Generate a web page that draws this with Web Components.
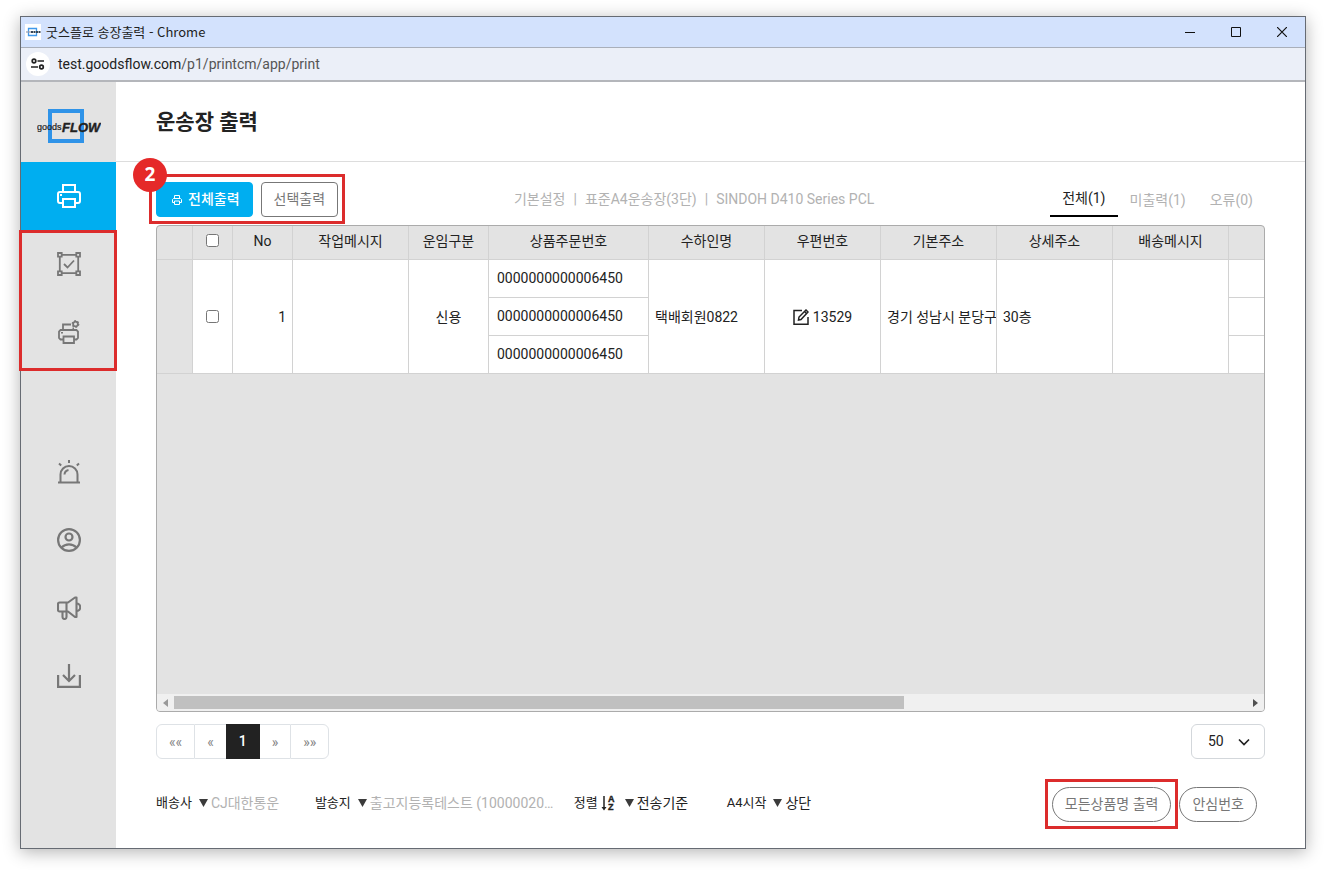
<!DOCTYPE html>
<html lang="ko">
<head>
<meta charset="utf-8">
<meta name="viewport" content="width=device-width, initial-scale=1">
<title>굿스플로 송장출력</title>
<style>
  * { box-sizing: border-box; }
  body {
    margin: 0;
    min-height: 100vh;
    padding: 16px 20px 24px;
    display: flex;
    background: #fff;
    color: #222;
    font: 14px/20px Roboto, "Noto Sans CJK KR", sans-serif;
  }
  app-window { flex: 1; min-width: 0; }
</style>
</head>
<body>
<app-window heading="굿스플로 송장출력 - Chrome" host="test.goodsflow.com" path="/p1/printcm/app/print">
  <side-nav slot="side">
    <nav-item icon="printer" label="운송장 출력" active></nav-item>
    <callout-frame class="stack">
      <nav-item icon="layout" label="양식 설정"></nav-item>
      <nav-item icon="printer-gear" label="프린터 설정"></nav-item>
    </callout-frame>
    <nav-item slot="lower" icon="alarm" label="알림"></nav-item>
    <nav-item slot="lower" icon="user" label="내 정보"></nav-item>
    <nav-item slot="lower" icon="horn" label="공지사항"></nav-item>
    <nav-item slot="lower" icon="download" label="다운로드"></nav-item>
  </side-nav>
  <print-page heading="운송장 출력">
    <callout-frame slot="actions" badge="2">
      <ui-button kind="primary" icon="printer-small">전체출력</ui-button>
      <ui-button>선택출력</ui-button>
    </callout-frame>
    <print-config slot="config"></print-config>
    <filter-tabs slot="tabs"></filter-tabs>
    <order-grid></order-grid>
    <page-nav slot="pager"></page-nav>
    <page-size slot="pager"></page-size>
    <pick-field slot="options" label="배송사" value="CJ대한통운" size="m" muted></pick-field>
    <pick-field slot="options" label="발송지" value="출고지등록테스트 (10000020…" size="l" muted></pick-field>
    <pick-field slot="options" label="정렬" value="전송기준" size="s" icon="sort"></pick-field>
    <pick-field slot="options" label="A4시작" value="상단" size="s"></pick-field>
    <callout-frame slot="extra">
      <ui-button kind="pill">모든상품명 출력</ui-button>
    </callout-frame>
    <ui-button slot="extra" kind="pill">안심번호</ui-button>
  </print-page>
</app-window>

<script>
const icons = {
  'printer': [24, 24, `<g fill="none" stroke="currentColor" stroke-width="2"><path d="M6 8V1h12v7"/><path d="M6 19H3a2 2 0 0 1-2-2v-7a2 2 0 0 1 2-2h18a2 2 0 0 1 2 2v7a2 2 0 0 1-2 2h-3"/><path d="M6 15h12v8H6z"/></g><path fill="currentColor" d="M3 10h2v2H3z"/>`],
  'printer-small': [10, 10, `<g fill="none" stroke="currentColor"><path d="M2.500 3.500v-3h5v3"/><path d="M2.500 7.500H.5v-3l1-1h7l1 1v3h-2"/><path d="M2.500 6h5v3.500h-5z"/></g>`],
  'layout': [24, 24, `<g fill="none" stroke="currentColor" stroke-width="1.800"><path d="M5 2.800h14M5 21.200h14M2.800 5v14M21.200 5v14"/><path d="M1 1h3.700v3.700H1zM19.300 1H23v3.700h-3.700zM1 19.300h3.700V23H1zM19.300 19.300H23V23h-3.700z"/><path d="M7 12l3.500 3.500L17 8.500"/></g>`],
  'printer-gear': [24, 24, `<g fill="none" stroke="currentColor" stroke-width="1.800"><path d="M6 10V4.500h8"/><path d="M6 19.500H3.500L2 18v-6.500L3.500 10h16l1.500 1.500V18l-1.500 1.500H17"/><path d="M6.500 16.500h10.500V23H6.500z"/><circle cx="18.500" cy="4" r="2.400"/></g><g fill="none" stroke="currentColor" stroke-width="1.200" stroke-dasharray="1.700 1.750"><circle cx="18.500" cy="4" r="3.300"/></g><path fill="currentColor" d="M4 12h2v1.500H4zM15.500 7.500H17V9h-1.500z"/>`],
  'alarm': [24, 24, `<g fill="none" stroke="currentColor" stroke-width="2"><path d="M3.500 22v-7.500a8.500 8.500 0 0 1 17 0V22"/><path d="M1 22.500h22"/><path d="M7.500 14.500a5 5 0 0 1 4-4.500"/><path d="M12 0v3M2 3.500l2.200 2M22 3.500l-2.200 2"/></g>`],
  'user': [24, 24, `<g fill="none" stroke="currentColor" stroke-width="2.200"><circle cx="12" cy="12" r="10.900"/><circle cx="12" cy="9" r="3.500"/><path d="M4.500 19.500c4-4.300 11-4.300 15 0"/></g>`],
  'horn': [24, 24, `<g fill="none" stroke="currentColor" stroke-width="2.100" stroke-linejoin="round"><path d="M9.500 6.500H2.500a1.500 1.500 0 0 0-1.500 1.500v6a1.500 1.500 0 0 0 1.500 1.500h8.500l7 5.500h1.500V1.500H18l-7 5H9.500v9"/><path d="M5.500 15.500V21a2 2 0 0 0 4 0v-5.500"/><path d="M19.500 7.500a3.700 3.700 0 0 1 0 7.500"/></g>`],
  'download': [24, 24, `<g fill="none" stroke="currentColor" stroke-width="2.200"><path d="M1.100 11v11.900h21.800V11"/><path d="M12 0v16M6 11l6 6 6-6"/></g>`],
  'edit': [16, 16, `<g fill="none" stroke="currentColor" stroke-width="1.500"><path d="M9 1.500H1v13.700h14V8"/><path d="M5.500 11l.5-3L13 1l2 2-7 7.500z"/><path d="M11.500 2.500l2 2"/></g>`],
  'sort': [15, 16, `<path d="M3 1v12" stroke="currentColor" stroke-width="1.500"/><path d="M.5 12h5L3 15.500z" fill="currentColor"/><text x="7" y="7" font-family="Liberation Sans, sans-serif" font-weight="700" font-size="9" fill="currentColor" stroke="currentColor" stroke-width=".4">A</text><text x="7" y="15" font-family="Liberation Sans, sans-serif" font-weight="700" font-size="9" fill="currentColor" stroke="currentColor" stroke-width=".4">Z</text>`],
  'triangle': [9, 8, `<path d="M0 0h9L4.500 8z" fill="#3b3b3b"/>`],
  'chevron': [12, 8, `<path d="M1 1.500l5 5 5-5" fill="none" stroke="currentColor" stroke-width="1.700"/>`],
  'left': [5, 8, `<path d="M5 0v8L0 4z" fill="currentColor"/>`],
  'right': [5, 8, `<path d="M0 0v8l5-4z" fill="currentColor"/>`],
  'site': [14, 12, `<g fill="none" stroke="currentColor" stroke-width="1.700"><circle cx="3" cy="3" r="1.800"/><circle cx="10.500" cy="9" r="1.800"/><path d="M6.500 3H13M0 9h7"/></g>`],
  'minimize': [10, 10, `<path d="M0 5.500h10" stroke="currentColor"/>`],
  'maximize': [10, 10, `<path d="M.5.5h9v9h-9z" fill="none" stroke="currentColor"/>`],
  'close': [10, 10, `<path d="M0 0l10 10M10 0L0 10" stroke="currentColor" stroke-width="1.200"/>`],
  'favicon': [16, 16, `<path fill="#fff" d="M0 0h16v16H0z"/><path d="M3.500 4.500h8v7h-8z" fill="none" stroke="#3f98ea" stroke-width="1.300"/><path d="M1 8h5" stroke="#99a" stroke-width="1.200"/><path d="M6 8h9.500" stroke="#345" stroke-width="1.800" stroke-dasharray="2 .5"/>`],
  'logo': [64, 36, `<path d="M13 3h32v30H13z" fill="none" stroke="#2f93e8" stroke-width="4"/><text x="0" y="22" font-family="Liberation Sans, sans-serif" font-size="9" fill="#222" stroke="#222" stroke-width=".2">goods</text><text x="25" y="24" font-family="Liberation Sans, sans-serif" font-size="13" font-weight="700" font-style="italic" fill="#222" stroke="#222" stroke-width=".4">FLOW</text>`]
};

const base = `*,*::before,*::after{box-sizing:border-box}:host{display:block}:host([hidden]){display:none}button,select,input{font:inherit;color:inherit}`;

class Base extends HTMLElement {
  connectedCallback() {
    if (this.shadowRoot) return;
    this.attachShadow({ mode: 'open' }).innerHTML = `<style>${base}${this.css()}</style>${this.html()}`;
  }
  at(name) { return this.getAttribute(name) || ''; }
  css() { return ''; }
  html() { return '<slot></slot>'; }
}

customElements.define('ui-icon', class extends Base {
  css() { return `:host{display:inline-flex;flex:none}svg{display:block}`; }
  html() {
    const [w, h, body] = icons[this.at('name')];
    return `<svg width="${w}" height="${h}" viewBox="0 0 ${w} ${h}" aria-hidden="true">${body}</svg>`;
  }
});

customElements.define('app-window', class extends Base {
  css() { return `
    :host{display:flex;flex-direction:column;border:1px solid #666b73;background:#fff;box-shadow:0 3px 16px rgba(0,0,0,.3)}
    .title{display:flex;align-items:center;height:31px;padding-left:4px;background:#d3e2fd;border-bottom:1px solid #a9afba;color:#222;font:13px/20px "Noto Sans CJK KR",sans-serif}
    .title span{flex:1;padding-left:5px}
    .title button{width:46px;height:30px;padding:0;border:0;background:none;display:flex;align-items:center;justify-content:center;color:#111}
    .address{display:flex;align-items:center;height:34px;padding-left:5px;gap:8px;background:#ebeff8;border-bottom:2px solid #b4b6bb;color:#222}
    .site{width:24px;height:24px;border:0;padding:0;border-radius:50%;background:#fff;display:flex;align-items:center;justify-content:center}
    .address em{font-style:normal;color:#555}
    .view{flex:1;display:flex;min-height:0}
    ::slotted(print-page){flex:1;min-width:0}
  `; }
  html() { return `
    <header class="title"><ui-icon name="favicon"></ui-icon><span>${this.at('heading')}</span>
      <button aria-label="최소화"><ui-icon name="minimize"></ui-icon></button>
      <button aria-label="최대화"><ui-icon name="maximize"></ui-icon></button>
      <button aria-label="닫기"><ui-icon name="close"></ui-icon></button></header>
    <div class="address"><button class="site" aria-label="사이트 정보"><ui-icon name="site"></ui-icon></button><span>${this.at('host')}<em>${this.at('path')}</em></span></div>
    <div class="view"><slot name="side"></slot><slot></slot></div>`; }
});

customElements.define('side-nav', class extends Base {
  css() { return `
    :host{width:95px;flex:none;background:#e3e3e3}
    nav{display:flex;flex-direction:column}
    .logo{height:80px;display:flex;align-items:center;justify-content:center;padding-top:8px}
    .lower{margin-top:72px}
  `; }
  html() { return `<nav><a class="logo" href="#" aria-label="goodsFLOW"><ui-icon name="logo"></ui-icon></a><slot></slot><div class="lower"><slot name="lower"></slot></div></nav>`; }
});

customElements.define('nav-item', class extends Base {
  css() { return `
    a{display:flex;align-items:center;justify-content:center;height:68px;color:#777}
    :host([active]) a{background:#00aef0;color:#fff}
  `; }
  html() { return `<a href="#" aria-label="${this.at('label')}"><ui-icon name="${this.at('icon')}"></ui-icon></a>`; }
});

customElements.define('callout-frame', class extends Base {
  css() { return `
    :host{display:flex;gap:8px;position:relative}
    :host(.stack){flex-direction:column;gap:0}
    .frame{position:absolute;inset:-8px -7px -7px;border:3px solid #dc2c2c;pointer-events:none}
    :host(.stack) .frame{inset:0 -1px -5px -2px}
    .badge{position:absolute;left:-23px;top:-24px;width:34px;height:34px;border-radius:50%;background:#e52929;color:#fff;text-align:center;font:700 19px/32px "Open Sans",sans-serif}
  `; }
  html() { return `<slot></slot><div class="frame"></div>${this.at('badge') ? `<span class="badge">${this.at('badge')}</span>` : ''}`; }
});

customElements.define('ui-button', class extends Base {
  css() { return `
    button{display:flex;align-items:center;justify-content:center;gap:6px;height:35px;padding:0 12px 2px;border:1px solid #777;border-radius:4px;background:#fff;color:#777;white-space:nowrap}
    ui-icon{padding-top:2px}
    :host([kind=primary]) button{background:#00aef0;border-color:#00aef0;color:#fff;font-weight:500;padding:0 12px 2px 15px}
    :host([kind=pill]) button{border-radius:18px}
  `; }
  html() { return `<button type="button">${this.at('icon') ? `<ui-icon name="${this.at('icon')}"></ui-icon>` : ''}<slot></slot></button>`; }
});

customElements.define('print-page', class extends Base {
  css() { return `
    :host{display:flex;flex-direction:column}
    h1{margin:0;height:80px;padding:0 40px;display:flex;align-items:center;border-bottom:1px solid #ddd;font-size:21px;line-height:28px;font-weight:700}
    main{flex:1;display:flex;flex-direction:column;padding:20px 40px 26px}
    .bar{display:flex;align-items:center;justify-content:space-between;height:35px}
    .bar.options{justify-content:flex-start;gap:20px}
    .extra{margin:0 8px 0 auto;display:flex;gap:8px}
    ::slotted(order-grid){flex:1;margin:8px 0 12px}
    .options{margin-top:28px}
  `; }
  html() { return `<h1>${this.at('heading')}</h1><main>
    <div class="bar"><slot name="actions"></slot><slot name="config"></slot><slot name="tabs"></slot></div>
    <slot></slot>
    <div class="bar"><slot name="pager"></slot></div>
    <div class="bar options"><slot name="options"></slot><div class="extra"><slot name="extra"></slot></div></div></main>`; }
});

customElements.define('print-config', class extends Base {
  css() { return `:host{color:#b2b2b2;padding-bottom:2px}span{white-space:nowrap}span+span::before{content:"|";margin:0 8px}`; }
  html() { return `<span>기본설정</span><span>표준A4운송장(3단)</span><span>SINDOH D410 Series PCL</span>`; }
});

customElements.define('filter-tabs', class extends Base {
  css() { return `
    div{display:flex}
    button{height:35px;padding:0 12px;border:0;background:none;color:#b2b2b2}
    button[aria-selected=true]{color:#222;border-bottom:2px solid #000;padding-bottom:2px}
  `; }
  html() { return `<div role="tablist"><button role="tab" aria-selected="true">전체(1)</button><button role="tab">미출력(1)</button><button role="tab">오류(0)</button></div>`; }
});

customElements.define('order-grid', class extends Base {
  css() { return `
    :host{display:flex;flex-direction:column;border:1px solid #ababab;border-radius:4px;background:#e3e3e3;overflow:hidden}
    .view{flex:1;overflow:hidden}
    table{table-layout:fixed;width:1352px;border-collapse:separate;border-spacing:0}
    th,td{padding:0 6px;border:solid #d2d2d2;border-width:0 1px 1px 0;overflow:hidden;white-space:nowrap;font-weight:400;text-align:left}
    th{height:34px;padding-bottom:4px;text-align:center}
    td{height:38px;background:#fff}
    td.head{background:#e3e3e3}
    td.mid{text-align:center}
    td.num{text-align:right}
    td.code{padding:0 8px 2px}
    input{display:block;width:13px;height:13px;margin:0 auto}
    .zip{display:flex;align-items:center;justify-content:center;gap:4px;color:#222}
    .scroll{display:flex;align-items:center;height:17px;background:#f0f0f0;color:#505050}
    .scroll ui-icon{width:17px;justify-content:center}
    .scroll ui-icon:first-child{color:#999}
    .track{flex:1;height:13px}
    .thumb{width:68%;height:13px;background:#c0c0c0}
  `; }
  html() {
    const widths = [36, 40, 60, 116, 80, 160, 116, 116, 116, 116, 116, 280];
    const heads = ['작업메시지', '운임구분', '상품주문번호', '수하인명', '우편번호', '기본주소', '상세주소', '배송메시지', ''];
    const code = '<td class="code">0000000000006450</td>';
    return `<div class="view"><table>
      <colgroup>${widths.map(w => `<col style="width:${w}px">`).join('')}</colgroup>
      <thead><tr><th></th><th><input type="checkbox" aria-label="모두 선택"></th><th>No</th>${heads.map(h => `<th>${h}</th>`).join('')}</tr></thead>
      <tbody>
        <tr><td class="head" rowspan="3"></td><td rowspan="3"><input type="checkbox" aria-label="1행 선택"></td><td class="num" rowspan="3">1</td><td rowspan="3"></td><td class="mid" rowspan="3">신용</td>${code}<td rowspan="3">택배회원0822</td><td rowspan="3"><span class="zip"><ui-icon name="edit"></ui-icon>13529</span></td><td rowspan="3">경기 성남시 분당구</td><td rowspan="3">30층</td><td rowspan="3"></td><td></td></tr>
        <tr>${code}<td></td></tr>
        <tr>${code}<td></td></tr>
      </tbody></table></div>
      <div class="scroll"><ui-icon name="left"></ui-icon><div class="track"><div class="thumb"></div></div><ui-icon name="right"></ui-icon></div>`;
  }
});

customElements.define('page-nav', class extends Base {
  css() { return `
    nav{display:flex;height:35px}
    button{padding:0 12px;border:solid #dee2e6;border-width:1px 0;background:#fff;color:#858585}
    button:first-child{border-width:1px;border-radius:6px 0 0 6px}
    button:last-child{border-width:1px;border-radius:0 6px 6px 0}
    button[aria-current]{padding:0 13px 2px;border-color:#222;background:#222;color:#fff;font-weight:500}
  `; }
  html() { return `<nav aria-label="페이지"><button>««</button><button>«</button><button aria-current="page">1</button><button>»</button><button>»»</button></nav>`; }
});

customElements.define('page-size', class extends Base {
  css() { return `
    label{display:grid;align-items:center}
    select,ui-icon{grid-area:1/1}
    select{appearance:none;width:74px;height:35px;padding:0 0 2px 16px;border:1px solid #d3d7db;border-radius:6px;background:#fff}
    ui-icon{justify-self:end;margin-right:15px;pointer-events:none}
  `; }
  html() { return `<label><select aria-label="페이지당 행 수"><option>50</option></select><ui-icon name="chevron"></ui-icon></label>`; }
});

customElements.define('pick-field', class extends Base {
  css() { return `
    label{display:flex;align-items:center;white-space:nowrap;padding-bottom:3px}
    .name{font-size:13px;margin-right:7px}
    .mark{margin:0 9px 0 -4px}
    select{appearance:none;border:0;padding:0;margin-left:3px;height:20px;background:none;opacity:1}
    :host([muted]) select{color:#b2b2b2}
    :host([size=s]) select{width:70px}
    :host([size=m]) select{width:84px}
    :host([size=l]) select{width:184px}
  `; }
  html() { return `<label><span class="name">${this.at('label')}</span>${this.at('icon') ? `<ui-icon class="mark" name="${this.at('icon')}"></ui-icon>` : ''}<ui-icon name="triangle"></ui-icon><select><option>${this.at('value')}</option></select></label>`; }
});
</script>
</body>
</html>
